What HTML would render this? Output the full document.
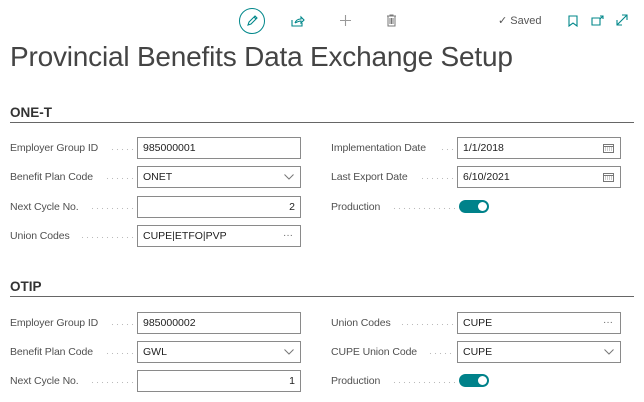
<!DOCTYPE html>
<html><head><style>
body{margin:0;width:644px;height:402px;background:#fff;font-family:"Liberation Sans",sans-serif;color:#212121;position:relative;overflow:hidden}
.a{position:absolute}
.lbl{position:absolute;font-size:10.5px;color:#505050;display:flex;align-items:center;height:22px;letter-spacing:-0.1px}
.dots{position:absolute;height:22px;background:radial-gradient(circle,#bbb 0.5px,transparent 0.8px) 0 11px/5px 3px repeat-x}
.inp{position:absolute;height:20px;border:1px solid #8a8a8a;background:#fff;font-size:10.5px;line-height:20px;padding:0 5px;box-sizing:content-box;color:#212121}
.h{position:absolute;font-size:13.5px;font-weight:bold;color:#333}
.line{position:absolute;left:10px;width:624px;height:1px;background:#666}
.tog{position:absolute;width:30px;height:13px;border-radius:7px;background:#00828a}
.tog:after{content:"";position:absolute;right:2px;top:2px;width:9px;height:9px;border-radius:50%;background:#fff}
.chev{position:absolute;right:6px;top:7px}
.dd{position:absolute;right:7px;top:0;font-size:10px;color:#666}
</style></head><body>
<div class="a" style="left:239px;top:8px;width:26px;height:26px;border:1.3px solid #00878a;border-radius:50%;box-sizing:border-box"></div>
<svg class="a" style="left:245px;top:14px" width="14" height="14" viewBox="0 0 14 14"><path d="M3 11l1-3 6-6 2 2-6 6z M9 3l2 2" fill="none" stroke="#00878a" stroke-width="1.1"/></svg>
<svg class="a" style="left:291px;top:15px" width="14" height="12" viewBox="0 0 14 12"><path d="M1 5v6h10V8 M4 8c1-3 3-4 6-4V2l3 3-3 3V6c-2 0-4 1-6 2" fill="none" stroke="#00878a" stroke-width="1.1"/></svg>
<svg class="a" style="left:339px;top:14px" width="13" height="13"><path d="M6.5 1v11M1 6.5h11" stroke="#999" stroke-width="1.1"/></svg>
<svg class="a" style="left:386px;top:14px" width="11" height="13" viewBox="0 0 11 13"><path d="M1 2h9M4 2V1h3v1M2 2v10h7V2M4 4v6M5.5 4v6M7 4v6" fill="none" stroke="#777" stroke-width="1"/></svg>
<div class="a" style="left:498px;top:14px;font-size:11px;color:#555">✓ Saved</div>
<svg class="a" style="left:568px;top:15px" width="10" height="12"><path d="M1 1h8v10L5 8 1 11z" fill="none" stroke="#00878a" stroke-width="1.1"/></svg>
<svg class="a" style="left:591px;top:15px" width="13" height="11"><path d="M1 3h8v7H1z M9 1h3v3 M12 1L9 4" fill="none" stroke="#00878a" stroke-width="1.1"/></svg>
<svg class="a" style="left:616px;top:14px" width="12" height="12"><path d="M1 11L11 1 M6 1h5v5 M1 6v5h5" fill="none" stroke="#00878a" stroke-width="1.1"/></svg>
<div class="a" style="left:10px;top:41px;font-size:28px;font-weight:300;color:#444;letter-spacing:-0.2px">Provincial Benefits Data Exchange Setup</div>

<div class="h" style="left:10px;top:105px">ONE-T</div><div class="line" style="top:122px"></div>
<div class="lbl" style="left:10px;top:137px">Employer Group ID</div><div class="dots" style="left:110px;top:137px;width:24px"></div>
<div class="inp" style="left:137px;top:137px;width:152px">985000001</div>
<div class="lbl" style="left:10px;top:166px">Benefit Plan Code</div><div class="dots" style="left:105px;top:166px;width:29px"></div>
<div class="inp" style="left:137px;top:166px;width:152px">ONET<svg class="chev" width="10" height="6"><path d="M.5.5l4.5 4.5 4.5-4.5" fill="none" stroke="#777"/></svg></div>
<div class="lbl" style="left:10px;top:196px">Next Cycle No.</div><div class="dots" style="left:90px;top:196px;width:44px"></div>
<div class="inp" style="left:137px;top:196px;width:152px;text-align:right">2</div>
<div class="lbl" style="left:10px;top:225px">Union Codes</div><div class="dots" style="left:80px;top:225px;width:54px"></div>
<div class="inp" style="left:137px;top:225px;width:152px">CUPE|ETFO|PVP<span class="dd">···</span></div>

<div class="lbl" style="left:331px;top:137px">Implementation Date</div><div class="dots" style="left:440px;top:137px;width:15px"></div>
<div class="inp" style="left:457px;top:137px;width:152px">1/1/2018<svg class="chev" style="top:5px" width="11" height="10"><path d="M.5 1.5h10v8H.5z M.5 3.5h10" fill="none" stroke="#777"/><path d="M2 5h1M4 5h1M6 5h1M8 5h1M2 7h1M4 7h1M6 7h1M8 7h1" stroke="#999"/></svg></div>
<div class="lbl" style="left:331px;top:166px">Last Export Date</div><div class="dots" style="left:420px;top:166px;width:35px"></div>
<div class="inp" style="left:457px;top:166px;width:152px">6/10/2021<svg class="chev" style="top:5px" width="11" height="10"><path d="M.5 1.5h10v8H.5z M.5 3.5h10" fill="none" stroke="#777"/><path d="M2 5h1M4 5h1M6 5h1M8 5h1M2 7h1M4 7h1M6 7h1M8 7h1" stroke="#999"/></svg></div>
<div class="lbl" style="left:331px;top:196px">Production</div><div class="dots" style="left:392px;top:196px;width:63px"></div>
<div class="tog" style="left:459px;top:200px"></div>

<div class="h" style="left:10px;top:279px">OTIP</div><div class="line" style="top:296px"></div>
<div class="lbl" style="left:10px;top:312px">Employer Group ID</div><div class="dots" style="left:110px;top:312px;width:24px"></div>
<div class="inp" style="left:137px;top:312px;width:152px">985000002</div>
<div class="lbl" style="left:10px;top:341px">Benefit Plan Code</div><div class="dots" style="left:105px;top:341px;width:29px"></div>
<div class="inp" style="left:137px;top:341px;width:152px">GWL<svg class="chev" width="10" height="6"><path d="M.5.5l4.5 4.5 4.5-4.5" fill="none" stroke="#777"/></svg></div>
<div class="lbl" style="left:10px;top:370px">Next Cycle No.</div><div class="dots" style="left:90px;top:370px;width:44px"></div>
<div class="inp" style="left:137px;top:370px;width:152px;text-align:right">1</div>

<div class="lbl" style="left:331px;top:312px">Union Codes</div><div class="dots" style="left:400px;top:312px;width:55px"></div>
<div class="inp" style="left:457px;top:312px;width:152px">CUPE<span class="dd">···</span></div>
<div class="lbl" style="left:331px;top:341px">CUPE Union Code</div><div class="dots" style="left:428px;top:341px;width:27px"></div>
<div class="inp" style="left:457px;top:341px;width:152px">CUPE<svg class="chev" width="10" height="6"><path d="M.5.5l4.5 4.5 4.5-4.5" fill="none" stroke="#777"/></svg></div>
<div class="lbl" style="left:331px;top:370px">Production</div><div class="dots" style="left:392px;top:370px;width:63px"></div>
<div class="tog" style="left:459px;top:374px"></div>
</body></html>
